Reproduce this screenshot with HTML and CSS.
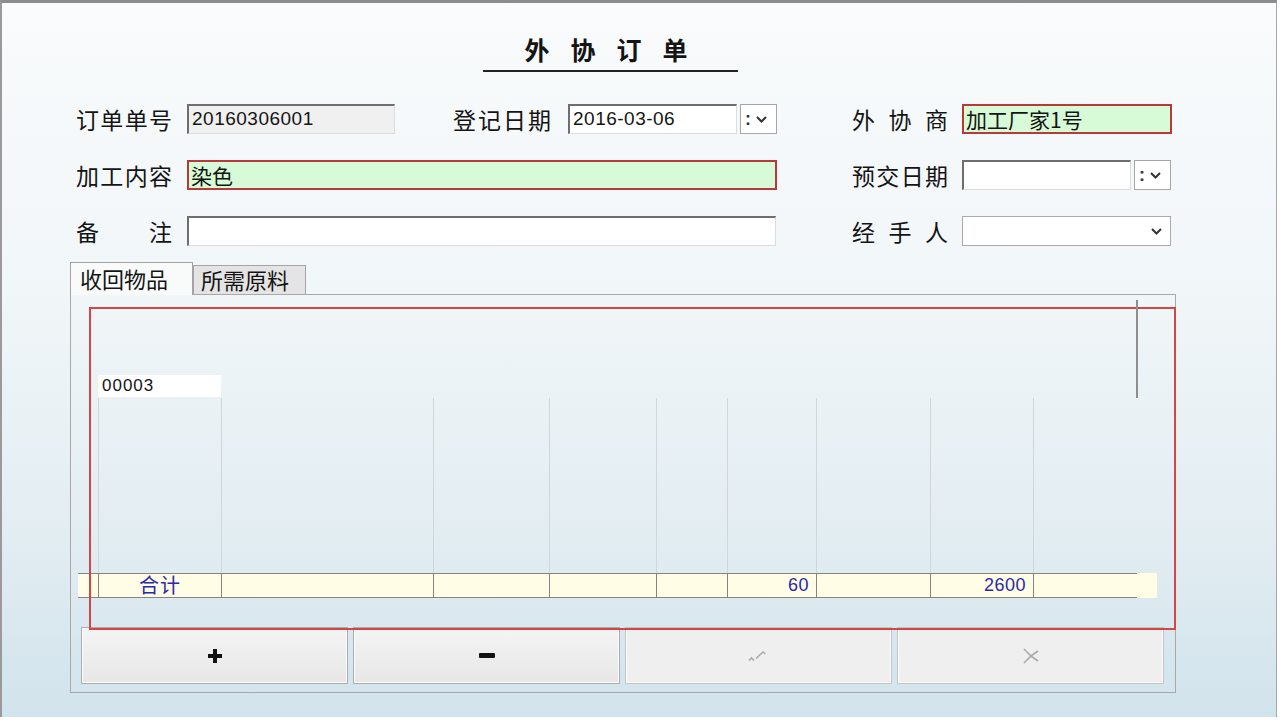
FILE: index.html
```html
<!DOCTYPE html>
<html lang="zh-CN">

<head>
    <meta charset="UTF-8">
    <title>外协订单</title>
    <link rel="stylesheet" href="styles.css">
</head>

<body>
    <div class="window">
        <div class="title-wrap">
            <h1 class="title">外协订单</h1>
        </div>

        <div class="form">
            <div class="row">
                <span class="lbl">订单单号</span>
                <div class="field readonly w208">20160306001</div>
                <span class="lbl lbl-date">登记日期</span>
                <div class="field w169">2016-03-06</div>
                <div class="spin">:<svg width="11" height="7" viewBox="0 0 11 7"><polyline points="1,1 5.5,5.5 10,1" /></svg></div>
                <span class="lbl lbl-right">外 协 商</span>
                <div class="field must w210">加工厂家1号</div>
            </div>
            <div class="row">
                <span class="lbl">加工内容</span>
                <div class="field must w590">染色</div>
                <span class="lbl lbl-right">预交日期</span>
                <div class="field w169"></div>
                <div class="spin">:<svg width="11" height="7" viewBox="0 0 11 7"><polyline points="1,1 5.5,5.5 10,1" /></svg></div>
            </div>
            <div class="row">
                <span class="lbl">备注</span>
                <div class="field w589"></div>
                <span class="lbl lbl-right lbl-last">经 手 人</span>
                <div class="select">
                    <svg width="11" height="7" viewBox="0 0 11 7"><polyline points="1,1 5.5,5.5 10,1" /></svg>
                </div>
            </div>
        </div>

        <div class="tabs">
            <div class="tab active">收回物品</div>
            <div class="tab">所需原料</div>
        </div>
        <div class="panel">
            <div class="grid-area">
                <div class="head">
                    <div class="cell-no">00003</div>
                </div>
                <div class="cols body">
                    <div></div><div></div><div></div><div></div><div></div>
                    <div></div><div></div><div></div><div></div><div></div>
                </div>
                <div class="cols sum">
                    <div></div>
                    <div class="center">合计</div>
                    <div></div><div></div><div></div><div></div>
                    <div class="num">60</div>
                    <div></div>
                    <div class="num">2600</div>
                    <div></div>
                    <div class="tail"></div>
                </div>
            </div>
            <div class="buttons">
                <button class="btn">
                    <svg width="14" height="14" viewBox="0 0 14 14"><path d="M5 0h4v5h5v4h-5v5h-4v-5h-5v-4h5z" fill="#111" /></svg>
                </button>
                <button class="btn">
                    <svg width="16" height="5" viewBox="0 0 16 5"><rect width="16" height="5" rx="1" fill="#111" /></svg>
                </button>
                <button class="btn" disabled>
                    <svg width="24" height="16" viewBox="0 0 24 16"><path d="M2 12.5 L4.5 10 L7 12.5 M9 10.5 L16 4 L18.5 6" class="dis" /></svg>
                </button>
                <button class="btn" disabled>
                    <svg width="18" height="16" viewBox="0 0 18 16"><path d="M2 1 L9 8 L16 3 M2 15 L9 8 L16 13" class="dis" /></svg>
                </button>
            </div>
            <!-- 红框 -->
            <div class="red-frame"></div>
            <div class="scroll-thumb"></div>
        </div>
    </div>
</body>

</html>
```

FILE: styles.css
```css
* {
    padding: 0;
    margin: 0;
    box-sizing: border-box;
}

body {
    width: 1280px;
    height: 720px;
    overflow: hidden;
    background: #fff;
    font-family: "Noto Sans CJK SC", "Noto Sans", sans-serif;
    color: #141414;
}

.window {
    width: 1277px;
    height: 717px;
    border-top: 3px solid #8c8c8c;
    border-left: 2px solid #9a9a9a;
    border-right: 1px solid #a8a8a8;
    background: linear-gradient(#f9fbfc 0%, #f1f6f8 40%, #e2edf2 75%, #d1e3ec 100%);
}

.title-wrap {
    padding-left: 481px;
    padding-top: 31px;
}

.title {
    width: 255px;
    font-size: 25px;
    line-height: 30px;
    font-weight: bold;
    text-align: center;
    letter-spacing: 21px;
    text-indent: 12px;
    padding-bottom: 6px;
    border-bottom: 2px solid #222;
}

/* 表单 */
.form {
    margin-top: 32px;
    margin-left: 74px;
    display: flex;
    flex-direction: column;
    gap: 26px;
}

.row {
    display: flex;
    align-items: center;
    height: 30px;
}

.lbl {
    width: 96px;
    margin-right: 15px;
    font-size: 23px;
    line-height: 30px;
    text-align: justify;
    text-align-last: justify;
    white-space: nowrap;
}

.lbl-date {
    width: 98px;
    margin-left: 58px;
    margin-right: 17px;
}

.lbl-right {
    margin-left: 75px;
    margin-right: 14px;
}

.lbl-last {
    margin-left: 76px;
}

.field {
    height: 30px;
    background: #fff;
    border-top: 2px solid #6e6e6e;
    border-left: 2px solid #6e6e6e;
    border-right: 1px solid #dcdcdc;
    border-bottom: 1px solid #dcdcdc;
    padding-left: 3px;
    font-family: "Liberation Sans", "Noto Sans CJK SC", sans-serif;
    font-size: 19px;
    line-height: 26px;
    letter-spacing: 0.5px;
    white-space: nowrap;
    overflow: hidden;
}

.field.readonly {
    background: #f0f0f0;
}

.field.must {
    background: #d6fbd6;
    border: 2px solid #b63a3a;
    font-family: "Noto Sans CJK SC", sans-serif;
    font-size: 21px;
    line-height: 26px;
    letter-spacing: 0;
    padding-left: 2px;
}

.w208 { width: 208px; }
.w169 { width: 169px; }
.w210 { width: 210px; }
.w590 { width: 590px; }
.w589 { width: 589px; }

.spin {
    width: 37px;
    height: 30px;
    margin-left: 3px;
    background: #fff;
    border: 1px solid #a6a6a6;
    display: flex;
    align-items: center;
    gap: 5px;
    padding-left: 4px;
    font-family: "Liberation Sans", sans-serif;
    font-size: 18px;
    font-weight: bold;
    color: #333;
}

.spin svg,
.select svg {
    fill: none;
    stroke: #333;
    stroke-width: 2;
}

.select {
    width: 209px;
    height: 30px;
    background: #fff;
    border: 1px solid #aaa;
    display: flex;
    align-items: center;
    justify-content: flex-end;
    padding-right: 8px;
}

/* 选项卡 */
.tabs {
    display: flex;
    align-items: flex-end;
    margin-top: 16px;
    margin-left: 68px;
    height: 32px;
}

.tab {
    width: 113px;
    height: 29px;
    padding: 0 7px;
    background: #e4e4e4;
    border: 1px solid #a4a4a4;
    border-bottom: none;
    font-size: 22px;
    line-height: 27px;
}

.tab.active {
    height: 33px;
    width: 123px;
    margin-bottom: -1px;
    padding: 0 9px;
    background: #f9fbfb;
    position: relative;
    z-index: 1;
    line-height: 30px;
}

.panel {
    position: relative;
    margin-left: 68px;
    width: 1106px;
    height: 399px;
    border: 1px solid #a8a8a8;
    padding-left: 7px;
}

.grid-area {
    height: 332px;
}

.head {
    height: 103px;
    display: flex;
    align-items: flex-end;
    padding-bottom: 1px;
}

.cell-no {
    margin-left: 20px;
    width: 123px;
    height: 22px;
    background: #fff;
    padding-left: 4px;
    font-family: "Liberation Sans", sans-serif;
    font-size: 17px;
    line-height: 22px;
    letter-spacing: 1px;
}

.cols {
    display: grid;
    width: 1079px;
    grid-template-columns: 20px 123px 212px 116px 107px 71px 89px 114px 103px 104px 20px;
}

.body {
    height: 175px;
}

.body div + div {
    border-left: 1px solid #d2d6d8;
}

.sum {
    height: 25px;
    background: #fffde6;
}

.sum div {
    border-top: 1px solid #858585;
    border-bottom: 1px solid #858585;
    color: #2a2aa8;
    font-size: 18px;
    line-height: 22px;
}

.sum div + div {
    border-left: 1px solid #858585;
}

.sum .tail {
    border: none;
}

.sum .center {
    text-align: center;
    font-size: 20px;
    letter-spacing: 1px;
}

.sum .num {
    text-align: right;
    padding-right: 7px;
    font-family: "Liberation Sans", sans-serif;
    font-size: 18px;
    letter-spacing: 0.5px;
}

/* 按钮 */
.buttons {
    display: flex;
    gap: 5px;
    margin-left: 3px;
}

.btn {
    width: 267px;
    height: 57px;
    border: 1px solid #acacac;
    background: linear-gradient(#f4f4f4, #e7e7e7);
    box-shadow: inset 0 0 0 1px #fcfcfc;
    display: flex;
    align-items: center;
    justify-content: center;
}

.btn[disabled] {
    background: #efefef;
    border-color: #c4c4c4;
}

.btn .dis {
    fill: none;
    stroke: #aaa;
    stroke-width: 1.6;
}

.red-frame {
    position: absolute;
    left: 18px;
    top: 12px;
    width: 1087px;
    height: 323px;
    border: 2px solid #d24646;
    pointer-events: none;
}

.scroll-thumb {
    position: absolute;
    left: 1065px;
    top: 5px;
    width: 2px;
    height: 98px;
    background: #8e8e8e;
}
```
